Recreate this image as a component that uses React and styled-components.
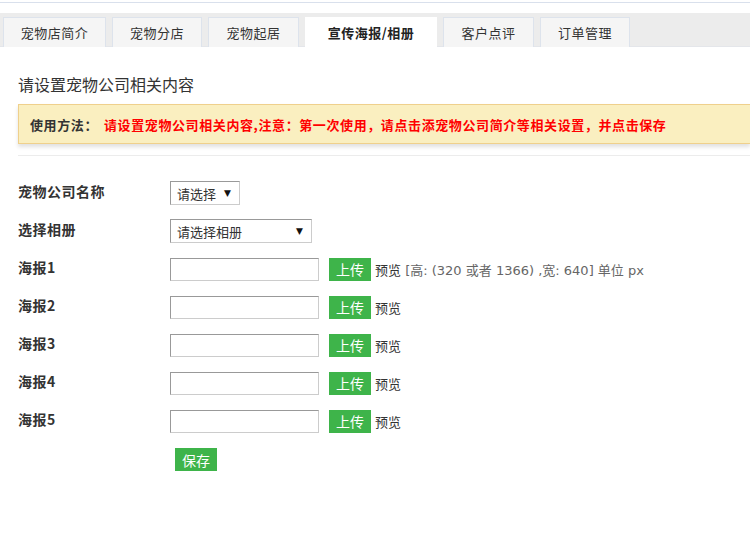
import styled, { createGlobalStyle } from 'styled-components';

const GlobalStyle = createGlobalStyle`
  html, body {
    margin: 0;
    padding: 0;
    background: #fff;
    font-family: 'Noto Sans CJK SC', 'Noto Sans', sans-serif;
    font-size: 13px;
    color: #333;
  }
  * { box-sizing: border-box; }
`;

const tabs = ['宠物店简介', '宠物分店', '宠物起居', '宣传海报/相册', '客户点评', '订单管理'];
const tabWidths = [103, 90, 91, 132, 91, 90];

const posters = [1, 2, 3, 4, 5];

const App = () => {
  return (
    <>
      <GlobalStyle />
      <Page>
        <TopLine />
        <TabBar>
          {tabs.map((t, i) => (
            <Tab key={t} active={i === 3} style={{ width: tabWidths[i] }}>
              {t}
            </Tab>
          ))}
        </TabBar>
        <Content>
          <Heading>请设置宠物公司相关内容</Heading>
          <Notice>
            <b>使用方法：</b>
            <NoticeRed>请设置宠物公司相关内容,注意：第一次使用，请点击添宠物公司简介等相关设置，并点击保存</NoticeRed>
          </Notice>
          <Divider />
          <Form>
            <Row>
              <Label>宠物公司名称</Label>
              <Select width={70}>
                <span>请选择</span>
                <Caret>▼</Caret>
              </Select>
            </Row>
            <Row>
              <Label>选择相册</Label>
              <Select width={142}>
                <span>请选择相册</span>
                <Caret>▼</Caret>
              </Select>
            </Row>
            {posters.map((n) => (
              <Row key={n}>
                <Label>海报{n}</Label>
                <TextInput />
                <GreenButton>上传</GreenButton>
                <Hint>
                  预览{n === 1 && <Gray> [高: (320 或者 1366) ,宽: 640] 单位 px</Gray>}
                </Hint>
              </Row>
            ))}
            <SaveRow>
              <GreenButton>保存</GreenButton>
            </SaveRow>
          </Form>
        </Content>
      </Page>
    </>
  );
};

export default App;

const Page = styled.div`
  width: 750px;
  height: 540px;
  overflow: hidden;
  padding-top: 2px;
`;

const TopLine = styled.div`
  height: 1px;
  background-color: #d9e0ec;
`;

const TabBar = styled.div`
  margin-top: 10px;
  height: 34px;
  background-color: #ececec;
  border-bottom: 1px solid #e4e6ea;
  display: flex;
  align-items: flex-end;
  gap: 6px;
  padding-left: 3px;
`;

const Tab = styled.div`
  height: 30px;
  margin-bottom: -1px;
  display: flex;
  align-items: center;
  justify-content: center;
  font-size: 13px;
  letter-spacing: 0.5px;
  color: ${(props) => (props.active ? '#222' : '#333')};
  font-weight: ${(props) => (props.active ? 700 : 400)};
  background-color: ${(props) => (props.active ? '#fff' : '#f5f5f5')};
  border: 1px solid ${(props) => (props.active ? '#fff' : '#dde3ec')};
  border-bottom: none;
`;

const Content = styled.div`
  padding-left: 18px;
`;

const Heading = styled.div`
  margin-top: 27px;
  font-size: 16px;
  color: #333;
  line-height: 20px;
`;

const Notice = styled.div`
  margin-top: 10px;
  height: 40px;
  display: flex;
  align-items: center;
  padding-left: 11px;
  background-color: #faefc0;
  border: 1px solid #efd08c;
  border-right: none;
  box-shadow: 0 3px 4px rgba(0, 0, 0, 0.12);
  font-size: 13px;
  letter-spacing: 0.6px;
  b {
    color: #333;
    font-weight: 700;
  }
`;

const NoticeRed = styled.span`
  margin-left: 6px;
  color: #f00;
  font-weight: 700;
  white-space: nowrap;
`;

const Divider = styled.div`
  margin-top: 11px;
  height: 1px;
  background-color: #ececec;
`;

const Form = styled.div`
  margin-top: 25px;
  display: flex;
  flex-direction: column;
  gap: 14px;
`;

const Row = styled.div`
  height: 24px;
  display: flex;
  align-items: center;
`;

const Label = styled.div`
  width: 152px;
  font-weight: 700;
  font-size: 14px;
  letter-spacing: 0.5px;
  color: #333;
  margin-top: -4px;
`;

const Select = styled.div`
  width: ${(props) => props.width}px;
  height: 24px;
  border: 1px solid #ccc;
  border-top-color: #999;
  border-left-color: #999;
  background: #fff;
  display: flex;
  align-items: center;
  justify-content: space-between;
  padding: 0 8px 0 6px;
  font-size: 13px;
  color: #333;
`;

const Caret = styled.span`
  font-size: 9px;
  color: #111;
  font-family: 'DejaVu Sans', sans-serif;
`;

const TextInput = styled.div`
  width: 149px;
  height: 23px;
  border: 1px solid #ccc;
  border-top-color: #999;
  border-left-color: #999;
  background: #fff;
`;

const GreenButton = styled.div`
  margin-left: 10px;
  width: 42px;
  height: 23px;
  background-color: #3eb44a;
  color: #fff;
  font-size: 14px;
  display: flex;
  align-items: center;
  justify-content: center;
`;

const Hint = styled.div`
  margin-left: 4px;
  font-size: 13px;
  color: #333;
  white-space: nowrap;
`;

const Gray = styled.span`
  color: #666;
  font-family: 'DejaVu Sans', 'Noto Sans CJK SC', sans-serif;
  font-size: 13px;
`;

const SaveRow = styled.div`
  height: 24px;
  margin-top: 1px;
  padding-left: 147px;
  display: flex;
`;
